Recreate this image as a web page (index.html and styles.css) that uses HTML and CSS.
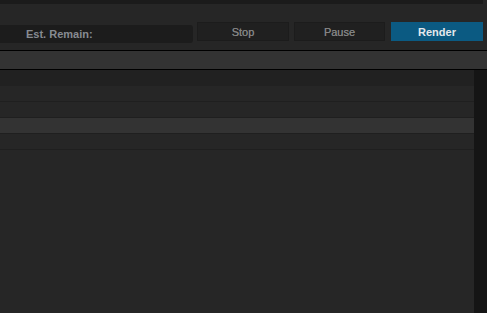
FILE: index.html
```html
<!DOCTYPE html>
<html lang="en">
<head>
  <meta charset="UTF-8" />
  <meta name="viewport" content="width=device-width, initial-scale=1.0" />
  <title>Render Queue</title>
  <link rel="stylesheet" href="styles.css">
</head>
<body>
  <div class="top-strip"></div>
  <div class="toolbar">
    <div class="est-field"><span>Est. Remain:</span></div>
    <button class="btn stop">Stop</button>
    <button class="btn pause">Pause</button>
    <button class="btn render">Render</button>
  </div>
  <div class="band"></div>
  <div class="queue">
    <div class="rows">
      <div class="row head"></div>
      <div class="row"></div>
      <div class="row"></div>
      <div class="row selected"></div>
      <div class="row"></div>
    </div>
    <div class="scrollbar"></div>
  </div>
</body>
</html>
```

FILE: styles.css
```css
html, body {
  height: 100%;
}
body {
  margin: 0;
  background: #262626;
  font-family: "Liberation Sans", Arial, sans-serif;
  font-size: 11px;
  overflow: hidden;
  display: flex;
  flex-direction: column;
}
.top-strip {
  height: 4px;
  margin-right: 4px;
  background: #1b1b1b;
}
.toolbar {
  height: 46px;
  display: flex;
  align-items: flex-start;
}
.est-field {
  width: 193px;
  height: 18px;
  margin-top: 21px;
  background: #1c1c1c;
  border-radius: 0 3px 3px 0;
  box-sizing: border-box;
  padding-left: 26px;
  line-height: 19px;
  font-weight: bold;
  color: #878b92;
}
.btn {
  height: 19px;
  margin-top: 18px;
  width: 92px;
  padding: 0;
  border: 1px solid #1c1c1c;
  background: #202020;
  font-family: "Liberation Sans", Arial, sans-serif;
  font-size: 11px;
  color: #838383;
  line-height: 18px;
  text-shadow: 0 0 0.4px #838383;
}
.stop {
  margin-left: 4px;
}
.pause {
  margin-left: 5px;
  width: 91px;
}
.render {
  margin-left: 6px;
  background: #0b5a82;
  border-color: #0b5a82;
  color: #e4e8ec;
  font-weight: bold;
  text-shadow: none;
}
.band {
  height: 18px;
  background: #333;
  border-top: 1px solid #000;
  border-bottom: 1px solid #000;
}
.queue {
  flex: 1;
  display: flex;
}
.rows {
  flex: 1;
}
.row {
  height: 15px;
  border-bottom: 1px solid #1f1f1f;
  background: #262626;
}
.row.head {
  height: 16px;
  border-bottom: none;
  background: #212121;
}
.row.selected {
  background: #333;
}
.scrollbar {
  width: 13px;
  background: #151515;
}
```
